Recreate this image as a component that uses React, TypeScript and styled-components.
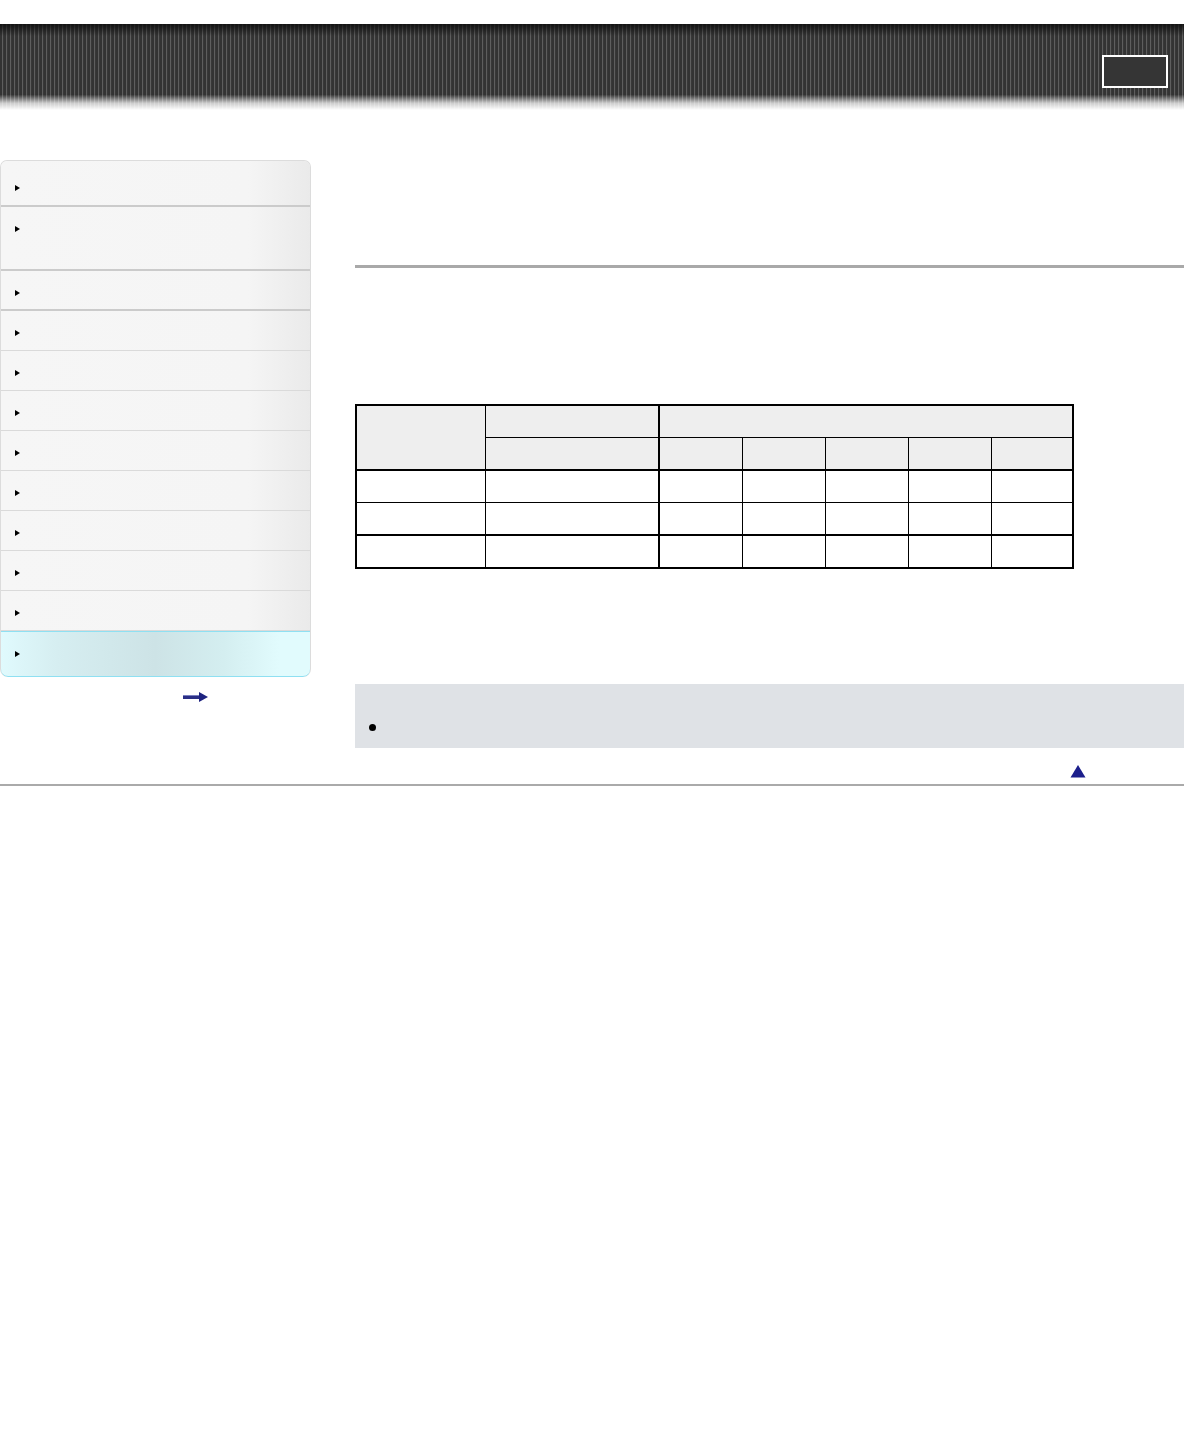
import React from "react";
import styled, { createGlobalStyle } from "styled-components";

const Global = createGlobalStyle`
  html, body { margin: 0; padding: 0; background: #fff; }
  body { font-family: "Liberation Sans", Arial, sans-serif; font-size: 12px; color: #000; }
`;

const Page = styled.div`
  width: 1184px;
  padding-top: 24px;
`;

const Header = styled.header`
  position: relative;
  height: 86px;
  display: flex;
  justify-content: flex-end;
  align-items: flex-start;
  padding: 31px 16px 0 0;
  box-sizing: border-box;
  background:
    linear-gradient(to bottom, rgba(10,10,10,0.8) 0%, rgba(10,10,10,0) 14%, rgba(0,0,0,0) 82%, rgba(255,255,255,0.75) 92%, #fff 100%),
    repeating-linear-gradient(to right, #333333 0px, #333333 2px, #5e5e5e 2px, #5e5e5e 3px, #383838 3px, #383838 4px);
`;

const HeaderBox = styled.div`
  width: 66px;
  height: 33px;
  box-sizing: border-box;
  border: 2px solid #fff;
  background: #353535;
`;

const Main = styled.div`
  display: flex;
  align-items: flex-start;
  padding-top: 50px;
`;

const SideColumn = styled.div`
  width: 311px;
  flex-shrink: 0;
`;

const Nav = styled.nav`
  display: flex;
  flex-direction: column;
  border: 1px solid #dcdcdc;
  border-bottom: none;
  border-radius: 7px 7px 8px 8px;
  overflow: hidden;
  background: #f5f5f5;
`;

const NavItem = styled.div<{ $h: number; $strong?: boolean; $active?: boolean; $pt?: number }>`
  height: ${(p) => p.$h}px;
  box-sizing: border-box;
  padding: ${(p) => p.$pt ?? 19}px 0 0 14px;
  border-bottom: ${(p) => (p.$strong ? "2px solid #cbcbcb" : "1px solid #dadada")};
  background: linear-gradient(to right, #f6f6f6 0%, #f5f5f5 80%, #eaeaea 100%);
  ${(p) =>
    p.$active &&
    `
    border: 1px solid #8fe0f2;
    border-radius: 0 0 8px 8px;
    margin: 0 -1px;
    background: linear-gradient(to right, #e0fafd 0%, #d6eef1 18%, #cde3e6 50%, #d4eef0 72%, #e1fbfd 90%, #e1fbfd 100%);
  `}
`;

const Tri = styled.span`
  display: block;
  width: 0;
  height: 0;
  border-top: 3px solid transparent;
  border-bottom: 3px solid transparent;
  border-left: 5px solid #000;
`;

const NextRow = styled.div`
  display: flex;
  padding: 15px 0 0 183px;
`;

const Content = styled.div`
  margin-left: 44px;
  flex: 1;
  display: flex;
  flex-direction: column;
`;

const TitleArea = styled.div`
  height: 105px;
`;

const Rule = styled.div`
  height: 3px;
  background: #a9a9a9;
`;

const Table = styled.table`
  margin-top: 136px;
  border-collapse: collapse;
  width: 717px;
  border: 2px solid #000;
  table-layout: fixed;
`;

const Th = styled.th<{ $thickBottom?: boolean; $thickRight?: boolean }>`
  background: #eeeeee;
  border: 1px solid #000;
  ${(p) => p.$thickBottom && "border-bottom: 2px solid #000;"}
  ${(p) => p.$thickRight && "border-right: 2px solid #000;"}
  height: 31px;
  padding: 0;
`;

const Td = styled.td<{ $thickBottom?: boolean; $thickRight?: boolean }>`
  border: 1px solid #000;
  ${(p) => p.$thickBottom && "border-bottom: 2px solid #000;"}
  ${(p) => p.$thickRight && "border-right: 2px solid #000;"}
  height: 31px;
  padding: 0;
`;

const Note = styled.div`
  margin-top: 115px;
  height: 64px;
  background: #dfe2e6;
  box-sizing: border-box;
  padding: 40px 0 0 14px;
`;

const Bullet = styled.span`
  display: block;
  width: 7px;
  height: 7px;
  border-radius: 50%;
  background: #000;
`;

const TopRow = styled.div`
  display: flex;
  justify-content: flex-end;
  padding: 17px 98px 6px 0;
`;

const FooterRule = styled.div`
  height: 2px;
  background: #aaaaaa;
`;

const ArrowRight = () => (
  <svg width="26" height="10" viewBox="0 0 26 10">
    <rect x="0" y="3" width="17" height="4" fill="#2a2f86" />
    <rect x="0" y="3" width="17" height="1" fill="#7a80c0" />
    <path d="M16 0 L25 5 L16 10 Z" fill="#1e2380" />
  </svg>
);

const ArrowUp = () => (
  <svg width="16" height="13" viewBox="0 0 16 13">
    <path d="M8 0 L15.5 12.5 L0.5 12.5 Z" fill="#1c1f8c" />
  </svg>
);

const navItems: { h: number; strong?: boolean; pt?: number }[] = [
  { h: 46, strong: true, pt: 24 },
  { h: 64, strong: true, pt: 19 },
  { h: 40, strong: true },
  { h: 40 },
  { h: 40 },
  { h: 40 },
  { h: 40 },
  { h: 40 },
  { h: 40 },
  { h: 40 },
  { h: 40 },
];

export default function App() {
  const subCols = [0, 1, 2, 3, 4];
  return (
    <>
      <Global />
      <Page>
        <Header>
          <HeaderBox />
        </Header>
        <Main>
          <SideColumn>
            <Nav>
              {navItems.map((it, i) => (
                <NavItem key={i} $h={it.h} $strong={it.strong} $pt={it.pt}>
                  <Tri />
                </NavItem>
              ))}
              <NavItem $h={46} $active $pt={19}>
                <Tri />
              </NavItem>
            </Nav>
            <NextRow>
              <ArrowRight />
            </NextRow>
          </SideColumn>
          <Content>
            <TitleArea />
            <Rule />
            <Table>
              <colgroup>
                <col style={{ width: 129 }} />
                <col style={{ width: 174 }} />
                <col style={{ width: 83 }} />
                <col style={{ width: 83 }} />
                <col style={{ width: 83 }} />
                <col style={{ width: 83 }} />
                <col style={{ width: 82 }} />
              </colgroup>
              <thead>
                <tr>
                  <Th rowSpan={2} $thickBottom />
                  <Th $thickRight />
                  <Th colSpan={5} />
                </tr>
                <tr>
                  <Th $thickBottom $thickRight />
                  {subCols.map((c) => (
                    <Th key={c} $thickBottom />
                  ))}
                </tr>
              </thead>
              <tbody>
                {[0, 1, 2].map((r) => (
                  <tr key={r}>
                    <Td $thickBottom={r === 1} />
                    <Td $thickBottom={r === 1} $thickRight />
                    {subCols.map((c) => (
                      <Td key={c} $thickBottom={r === 1} />
                    ))}
                  </tr>
                ))}
              </tbody>
            </Table>
            <Note>
              <Bullet />
            </Note>
          </Content>
        </Main>
        <TopRow>
          <ArrowUp />
        </TopRow>
        <FooterRule />
      </Page>
    </>
  );
}
